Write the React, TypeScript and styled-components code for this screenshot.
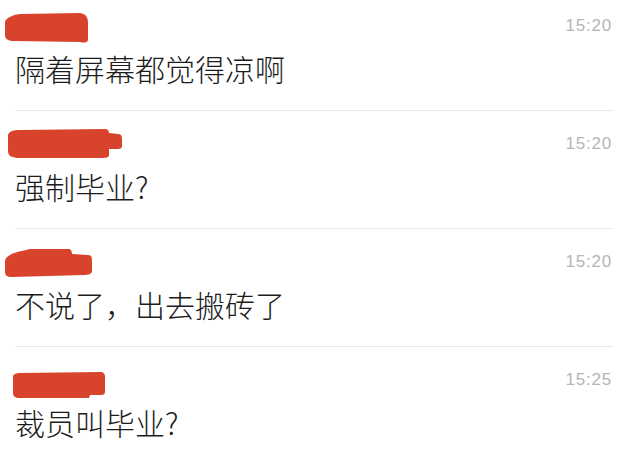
import React from "react";
import styled, { createGlobalStyle } from "styled-components";

const GlobalStyle = createGlobalStyle`
  html, body {
    margin: 0;
    padding: 0;
    background: #ffffff;
  }
  body {
    font-family: "Noto Sans CJK SC", "Noto Sans", sans-serif;
  }
`;

interface Comment {
  time: string;
  text: string;
  blob: string;
}

// redaction marks, drawn in header coordinates (header is 36px tall)
const comments: Comment[] = [
  {
    time: "15:20",
    text: "隔着屏幕都觉得凉啊",
    blob:
      "M5,13 C6,9 12,6 20,5 L80,4 C86,5 88,8 88,14 L88,31 C87,34 84,34 80,33 L15,32 C8,32 5,30 5,26 Z",
  },
  {
    time: "15:20",
    text: "强制毕业?",
    blob:
      "M8,8 C9,4 14,3 20,3 L105,2 C108,2 109,4 109,6 L118,7 C122,7 122,10 122,13 L122,19 C122,22 119,22 116,22 L109,22 L109,28 C109,31 105,31 100,31 L20,31 C12,31 8,29 8,24 Z",
  },
  {
    time: "15:20",
    text: "不说了，出去搬砖了",
    blob:
      "M5,16 C6,11 12,8 22,6 L30,4 L68,4 C71,4 72,6 72,9 L88,10 C92,10 92,13 92,16 L92,26 C92,29 88,30 84,30 L12,32 C7,32 5,30 5,27 Z",
  },
  {
    time: "15:25",
    text: "裁员叫毕业?",
    blob:
      "M13,14 C13,11 16,10 20,10 L100,9 C104,9 105,11 105,14 L105,29 C105,32 102,32 99,32 L90,32 L89,35 L20,35 C15,35 13,33 13,30 Z",
  },
];

export default function App() {
  return (
    <>
      <GlobalStyle />
      <List>
        {comments.map((c, i) => (
          <Item key={i} $first={i === 0}>
            <Header>
              <Redaction viewBox="0 0 130 36" width={130} height={36}>
                <path d={c.blob} fill="#d8432c" />
              </Redaction>
              <Time>{c.time}</Time>
            </Header>
            <Body>{c.text}</Body>
            {i < comments.length - 1 && <Divider />}
          </Item>
        ))}
      </List>
    </>
  );
}

const List = styled.div`
  width: 640px;
  height: 459px;
  overflow: hidden;
  background: #ffffff;
  display: flex;
  flex-direction: column;
`;

const Item = styled.div<{ $first?: boolean }>`
  display: flex;
  flex-direction: column;
  padding-top: ${(p) => (p.$first ? 9 : 16)}px;
`;

const Header = styled.div`
  height: 36px;
  display: flex;
  justify-content: space-between;
  align-items: flex-start;
  padding-right: 28px;
`;

const Redaction = styled.svg`
  display: block;
  filter: blur(0.5px);
`;

const Time = styled.span`
  margin-top: 7px;
  font-family: "Liberation Sans", "Noto Sans", sans-serif;
  font-size: 17px;
  line-height: 20px;
  letter-spacing: 0.8px;
  color: #b5b5b5;
`;

const Body = styled.div`
  margin-top: 5px;
  padding-left: 15px;
  height: 36px;
  font-size: 30px;
  font-weight: 300;
  line-height: 36px;
  color: #1c1c1c;
  white-space: nowrap;
`;

const Divider = styled.div`
  margin: 24px 27px 0 15px;
  height: 1px;
  background: #e6e6e6;
`;
